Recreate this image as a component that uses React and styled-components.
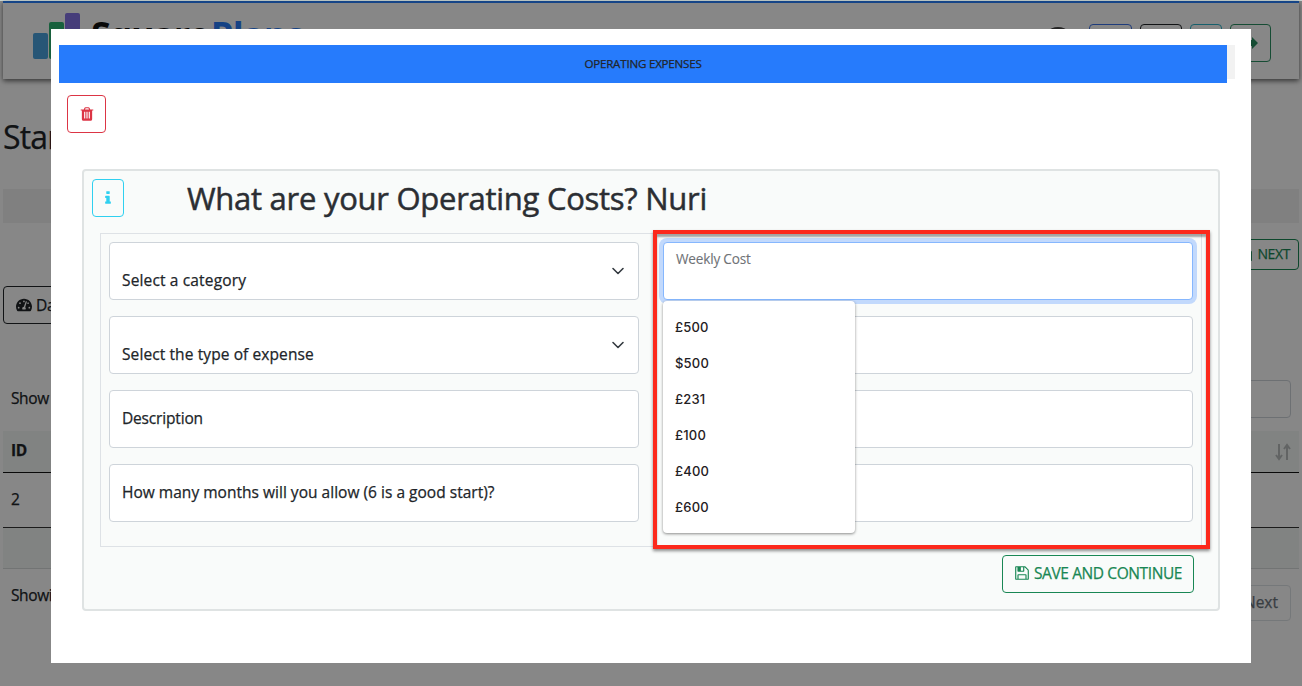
import React from 'react';
import styled, { createGlobalStyle } from 'styled-components';
import { FaTachometerAlt } from 'react-icons/fa';

const Global = createGlobalStyle`
  * { box-sizing: border-box; }
  body {
    margin: 0; font-family: "Open Sans", "Noto Sans", sans-serif; font-size: 15.5px; line-height: 24px;
    color: #212529; overflow: hidden; -webkit-text-stroke: .25px currentColor;
  }
`;

const Screen = styled.div`
  position: relative; width: 1302px; height: 686px; overflow: hidden; background: #fff;
`;
const Page = styled.div`
  display: flex; flex-direction: column; height: 686px; padding: 0 3px; background: #fff; border-top: 1px solid #ccd8d6;
`;
const Header = styled.header`
  display: flex; justify-content: space-between; height: 78px; border-top: 2px solid #2a83ff; flex: none;
  padding: 10px 28px 0 30px; box-shadow: 0 2px 5px rgba(0,0,0,.6);
`;
const Brand = styled.div`display: flex; gap: 11px;`;
const BrandName = styled.div`
  font: 700 36px/38px "Open Sans", sans-serif; color: #111; letter-spacing: -1.3px; padding-top: 3px;
  -webkit-text-stroke-width: 0;
  span { color: #2a7dfa; letter-spacing: -.8px; margin-left: 2px; }
`;
const HeaderActions = styled.div`display: flex; gap: 8px; padding-top: 11px;`;
const Avatar = styled.div`
  width: 32px; height: 32px; margin: 3px 7px 0 0; border-radius: 50%; background: #77716f; border-top: 2px solid #444;
`;
const Outline = styled.div`
  display: flex; align-items: center; justify-content: ${p => p.$justify || 'center'}; flex: none; gap: 4px;
  width: ${p => p.$w}px; height: ${p => p.$h || 38}px; padding: 0 ${p => p.$px || 0}px 1px; border: 1px solid ${p => p.$c}; color: ${p => p.$c};
  border-radius: 4px; font-size: ${p => p.$fs || 15.5}px; letter-spacing: ${p => p.$ls || 0}px; white-space: nowrap;
`;
const PageTitle = styled.h1`
  margin: 39px 0 1px; font-size: 32px; font-weight: 400; line-height: 38px; letter-spacing: -.8px; flex: none;
`;
const Strip = styled.div`height: 34px; margin-top: 32px; background: #f2f2f2; flex: none;`;
const Row = styled.div`
  display: flex; justify-content: space-between; align-items: ${p => p.$top ? 'flex-start' : 'center'}; flex: none;
  margin-top: ${p => p.$mt || 0}px; height: ${p => p.$h}px; padding: 0 8px; letter-spacing: -.4px;
`;
const RowText = styled.span`padding-bottom: 3px;`;
const NextRow = styled(Row)`justify-content: flex-end; padding: 0;`;
const DashRow = styled(Row)`padding: 0;`;
const TableRow = styled(Row)`
  background: ${p => p.$bg || 'transparent'}; border-bottom: 1px solid ${p => p.$line}; font-weight: ${p => p.$bold ? 700 : 400};
`;
const Search = styled.div`width: 160px; height: 38px; border: 1px solid #ced4da; border-radius: 4px;`;
const Pager = styled.div`
  border: 1px solid #dee2e6; border-radius: 0 4px 4px 0; color: #6c757d; height: 36px; line-height: 33px; padding: 0 12px; margin-top: 2px; letter-spacing: 0;
`;
const Backdrop = styled.div`
  position: absolute; inset: 1px 0 0; background: rgba(0,0,0,.47);
`;
const Modal = styled.section`
  position: absolute; left: 51px; top: 29px; width: 1200px; height: 634px; background: #fff;
  padding: 16px 16px 0 8px; display: flex; flex-direction: column;
`;
const Progress = styled.div`height: 34px; background: #f2f2f2; flex: none;`;
const ProgressLabel = styled.div`
  width: 1168px; height: 38px; background: #267bfc; text-align: center; font-size: 11.6px; line-height: 37px; letter-spacing: -.22px; color: #212529;
`;
const DeleteSlot = styled.div`padding: 16px 0 0 8px;`;
const Card = styled.div`
  margin: 36px 15px 0 23px; height: 442px; border: 2px solid #dfe3e3; border-radius: 4px; background: #f9fbfa;
  display: flex; flex-direction: column; flex: none;
`;
const CardHead = styled.div`display: flex; padding: 8px 8px 0; gap: 63px; height: 62px; flex: none;`;
const Title = styled.h2`
  margin: 0; font-weight: 400; font-size: 31px; line-height: 38px; color: #2b2e33; letter-spacing: -.27px; white-space: nowrap;
  -webkit-text-stroke-width: .5px;
`;
const Fields = styled.div`
  margin: 0 16px; height: 314px; border: 1px solid #dee2e6; padding: 8px;
  display: grid; grid-template-columns: 530px 530px; column-gap: 24px; row-gap: 16px; grid-auto-rows: 58px; flex: none;
`;
const Field = styled.div`
  border: 1px solid ${p => p.$focus ? '#86b7fe' : '#ced4da'}; border-radius: 4px; background: #fff;
  box-shadow: ${p => p.$focus ? '0 0 0 4px #c2d9fc' : 'none'};
  display: flex; justify-content: space-between; align-items: center; padding: ${p => p.$select ? '18px 12px 0' : '0 12px 2px'};
  letter-spacing: ${p => p.$ls || 0}px; white-space: nowrap;
  svg { margin-top: -18px; }
`;
const FloatLabel = styled.span`
  align-self: flex-start; font-size: 13.6px; line-height: 20px; margin-top: 6px; letter-spacing: -.2px; color: #6f7276;
  -webkit-text-stroke-width: .1px;
`;
const CardFoot = styled.div`display: flex; justify-content: flex-end; padding: 8px 24px 0;`;
const SaveButton = styled(Outline)`padding-bottom: 2px;`;
const Menu = styled.ul`
  position: absolute; left: 663px; top: 301px; width: 192px; height: 232px; margin: 0; padding: 8px 0; list-style: none;
  background: #fff; border-radius: 4px; box-shadow: 0 1px 3px rgba(0,0,0,.45);
  font: 500 13px/36px Inter, sans-serif; color: #1f2023; letter-spacing: .2px; -webkit-text-stroke-width: 0;
`;
const Option = styled.li`height: 36px; padding-left: 12px;`;
const Highlight = styled.div`
  position: absolute; left: 653px; top: 230px; width: 557px; height: 319px; border: 4px solid #fc291c;
  box-shadow: 0 2px 3px rgba(0,0,0,.45), inset 0 3px 2px rgba(0,0,0,.35);
`;

const Glyph = ({ size = 16, d }) => (
  <svg width={size} height={size} viewBox="0 0 1792 1792" fill="currentColor"><path d={d} /></svg>
);
const TRASH = 'M704 1376v-704q0-14-9-23t-23-9h-64q-14 0-23 9t-9 23v704q0 14 9 23t23 9h64q14 0 23-9t9-23zm256 0v-704q0-14-9-23t-23-9h-64q-14 0-23 9t-9 23v704q0 14 9 23t23 9h64q14 0 23-9t9-23zm256 0v-704q0-14-9-23t-23-9h-64q-14 0-23 9t-9 23v704q0 14 9 23t23 9h64q14 0 23-9t9-23zm-544-992h448l-48-117q-7-9-17-11h-317q-10 2-17 11zm928 32v64q0 14-9 23t-23 9h-96v948q0 83-47 143.500t-113 60.500h-832q-66 0-113-58.500t-47-141.500v-952h-96q-14 0-23-9t-9-23v-64q0-14 9-23t23-9h309l70-167q15-37 54-63t79-26h320q40 0 79 26t54 63l70 167h309q14 0 23 9t9 23z';
const FLOPPY = 'M512 1536h768v-384h-768v384zm896 0h128v-896q0-14-10-38.500t-20-34.500l-281-281q-10-10-34-20t-39-10v416q0 40-28 68t-68 28h-576q-40 0-68-28t-28-68v-416h-128v1280h128v-416q0-40 28-68t68-28h832q40 0 68 28t28 68v416zm-384-928v-320q0-13-9.500-22.500t-22.500-9.500h-192q-13 0-22.500 9.500t-9.500 22.500v320q0 13 9.500 22.500t22.500 9.500h192q13 0 22.500-9.500t9.500-22.500zm640 32v928q0 40-28 68t-68 28h-1344q-40 0-68-28t-28-68v-1344q0-40 28-68t68-28h928q40 0 88 20t76 48l280 280q28 28 48 76t20 88z';
const INFO = 'M1216 1344v128q0 26-19 45t-45 19h-512q-26 0-45-19t-19-45v-128q0-26 19-45t45-19h64v-384h-64q-26 0-45-19t-19-45v-128q0-26 19-45t45-19h384q26 0 45 19t19 45v576h64q26 0 45 19t19 45zm-128-1152v192q0 26-19 45t-45 19h-256q-26 0-45-19t-19-45v-192q0-26 19-45t45-19h256q26 0 45 19t19 45z';

const Chevron = () => (
  <svg width="16" height="16" viewBox="0 0 16 16" fill="none" stroke="#343a40" strokeWidth="1.6" strokeLinecap="round" strokeLinejoin="round">
    <path d="M3 5.5l5 5 5-5" />
  </svg>
);
const Bars = () => (
  <svg width="47" height="50" viewBox="0 0 47 50">
    <rect x="0" y="20" width="15" height="26" rx="2" fill="#4aa3df" />
    <rect x="16" y="9" width="15" height="37" rx="2" fill="#2fb573" />
    <rect x="32" y="0" width="15" height="46" rx="2" fill="#8573e6" />
  </svg>
);
const Sort = () => (
  <svg width="16" height="18" viewBox="0 0 16 18" fill="none" stroke="#b9bdbd" strokeWidth="2">
    <path d="M4 1v14M1 12l3 4 3-4M12 17V3M9 6l3-4 3 4" />
  </svg>
);
const Arrow = () => (
  <svg width="16" height="16" viewBox="0 0 16 16"><path d="M0 5h9V2l6 6-6 6v-3H0z" fill="currentColor" /></svg>
);

const costs = ['£500', '$500', '£231', '£100', '£400', '£600'];

export default function App() {
  return (
    <Screen>
      <Global />
      <Page>
        <Header>
          <Brand><Bars /><BrandName>Square<span>Plans</span></BrandName></Brand>
          <HeaderActions>
            <Avatar />
            <Outline $w={43} $c="#3b71e8" />
            <Outline $w={42} $c="#212529" />
            <Outline $w={32} $c="#2cb5cc" />
            <Outline $w={41} $c="#2a9062"><Arrow /></Outline>
          </HeaderActions>
        </Header>
        <PageTitle>Startup Costs</PageTitle>
        <Strip />
        <NextRow $mt={16} $h={31}>
          <Outline $w={80} $h={31} $px={8} $justify="flex-end" $fs={14} $ls={-0.4} $c="#198754"><Glyph size={15} d={FLOPPY} />NEXT</Outline>
        </NextRow>
        <DashRow $mt={16} $h={38}>
          <Outline $w={130} $px={12} $justify="flex-start" $c="#212529" $ls={-0.2}><FaTachometerAlt size={16} />Dashboard</Outline>
        </DashRow>
        <Row $mt={56} $h={38}><RowText>Show</RowText><Search /></Row>
        <TableRow $mt={13} $h={42} $bg="#f4f8f6" $line="#111" $bold><RowText>ID</RowText><Sort /></TableRow>
        <TableRow $h={55} $line="#333"><RowText>2</RowText></TableRow>
        <TableRow $h={41} $bg="#f4f8f6" $line="#d8dcdc" />
        <Row $mt={14} $h={38} $top><RowText>Showing 1 to 1</RowText><Pager>Next</Pager></Row>
      </Page>
      <Backdrop />
      <Modal>
        <Progress><ProgressLabel>OPERATING EXPENSES</ProgressLabel></Progress>
        <DeleteSlot><Outline $w={39} $c="#dc3545"><Glyph d={TRASH} /></Outline></DeleteSlot>
        <Card>
          <CardHead>
            <Outline $w={32} $c="#2fd0f0"><Glyph size={16} d={INFO} /></Outline>
            <Title>What are your Operating Costs? Nuri</Title>
          </CardHead>
          <Fields>
            <Field $select $ls={0.15}>Select a category<Chevron /></Field>
            <Field $focus><FloatLabel>Weekly Cost</FloatLabel></Field>
            <Field $select $ls={0.1}>Select the type of expense<Chevron /></Field>
            <Field />
            <Field $ls={-0.17}>Description</Field>
            <Field />
            <Field $ls={0.02}>How many months will you allow (6 is a good start)?</Field>
            <Field />
          </Fields>
          <CardFoot><SaveButton $w={192} $c="#198754" $ls={-0.4}><Glyph d={FLOPPY} />SAVE AND CONTINUE</SaveButton></CardFoot>
        </Card>
      </Modal>
      <Highlight />
      <Menu>{costs.map(c => <Option key={c}>{c}</Option>)}</Menu>
    </Screen>
  );
}
